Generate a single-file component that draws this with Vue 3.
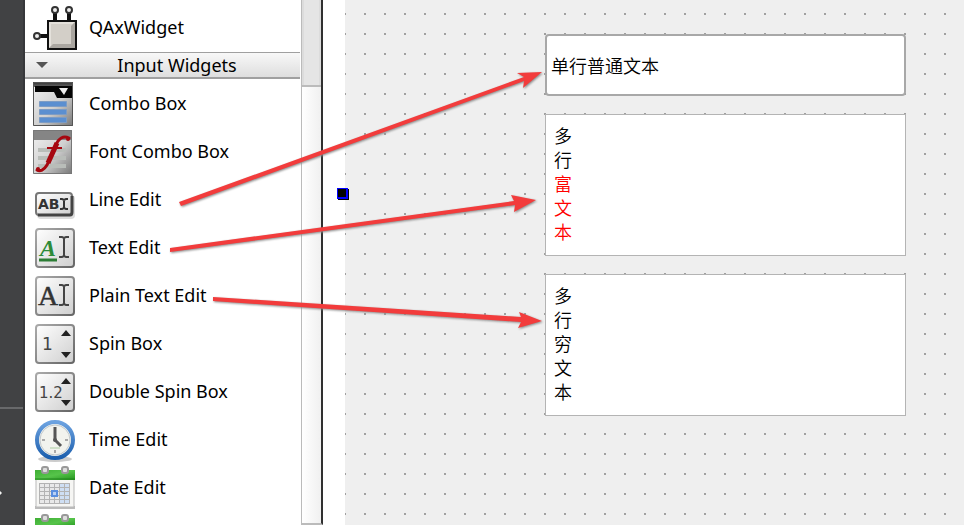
<script setup>
import { ref } from 'vue'

const widgets = [
  { label: 'Combo Box', icon: 'combo' },
  { label: 'Font Combo Box', icon: 'font' },
  { label: 'Line Edit', icon: 'line' },
  { label: 'Text Edit', icon: 'text' },
  { label: 'Plain Text Edit', icon: 'plain' },
  { label: 'Spin Box', icon: 'spin' },
  { label: 'Double Spin Box', icon: 'double' },
  { label: 'Time Edit', icon: 'time' },
  { label: 'Date Edit', icon: 'date' },
  { label: '', icon: 'date' }
]

const single = ref('单行普通文本')
const plain = ref('多\n行\n穷\n文\n本')
const gridCols = [0, 1, 2, 3, 4, 5]
const gridRows = [0, 1, 2, 3, 4]
</script>

<template>
  <div class="designer">
    <aside class="rail">
      <div class="rail-top"></div>
      <div class="rail-bottom">
        <svg class="rail-arrow" viewBox="0 0 3 6" aria-hidden="true"><path d="M0 1L2 3L0 5Z" fill="#f4f4f4" /></svg>
      </div>
    </aside>

    <nav class="palette">
      <ul class="group lead">
        <li class="item">
          <svg class="icon" viewBox="0 0 44 48" aria-hidden="true">
            <g stroke="#111" fill="none">
              <path d="M22 9V19M36 9V19M7 33H15" stroke-width="4" />
              <g stroke="#333" stroke-width="2" fill="#eee">
                <circle cx="22" cy="7" r="3" /><circle cx="36" cy="7" r="3" /><circle cx="4" cy="33" r="3" />
              </g>
            </g>
            <path d="M14 17H44V47H14Z" fill="#111" />
            <path d="M16 19H42V45H16Z" fill="#d3cfc8" />
            <path d="M16 45V19H42L40 21H18V43Z" fill="#e4e1db" />
            <path d="M42 19V45H16L20 41H38V23Z" fill="#aaa6a0" />
          </svg>
          <span>QAxWidget</span>
        </li>
      </ul>
      <button class="heading" type="button">
        <svg class="chevron" viewBox="0 0 12 6" aria-hidden="true"><path d="M0 0H12L6 6Z" fill="#555" /></svg>
        <span>Input Widgets</span>
      </button>
      <ul class="group">
        <li v-for="(w, i) in widgets" :key="i" class="item">
          <svg class="icon" viewBox="0 0 44 48" aria-hidden="true">
            <defs>
              <linearGradient id="face" x1="0" y1="0" x2="1" y2="1">
                <stop offset="0" stop-color="#fff" /><stop offset="1" stop-color="#cfcfcf" />
              </linearGradient>
              <linearGradient id="edge" x1="0" y1="0" x2="1" y2="1">
                <stop offset="0" stop-color="#aaa" /><stop offset="1" stop-color="#666" />
              </linearGradient>
              <linearGradient id="metal" x1="0" y1="0" x2="1" y2="1">
                <stop offset="0" stop-color="#f2f2f2" /><stop offset=".55" stop-color="#d0d0d0" /><stop offset="1" stop-color="#777" />
              </linearGradient>
              <linearGradient id="dark" x1="0" y1="0" x2="0" y2="1">
                <stop offset="0" stop-color="#333" /><stop offset="1" stop-color="#666" />
              </linearGradient>
              <linearGradient id="green" x1="0" y1="0" x2="1" y2="1">
                <stop offset="0" stop-color="#3fae35" /><stop offset=".5" stop-color="#56c44a" /><stop offset="1" stop-color="#23941d" />
              </linearGradient>
              <linearGradient id="blue" x1="0" y1="0" x2="0" y2="1">
                <stop offset="0" stop-color="#6ca2e0" /><stop offset="1" stop-color="#1c5fae" />
              </linearGradient>
            </defs>

            <g v-if="w.icon === 'combo'">
              <path d="M0 3H40V47H0Z" fill="url(#metal)" />
              <path d="M0 3H40V8H0Z" fill="url(#dark)" />
              <path d="M2 7H39V19H24L21 13H2Z" fill="#050505" />
              <path d="M26 9H35L31 16Z" fill="#eee" />
              <path d="M.5 3.5H39.5V46.5H.5Z" fill="none" stroke="#555" />
              <g fill="#5b8fd0" stroke="#7d9cc4">
                <path d="M6.5 22.5H33.5V27.5H6.5ZM6.5 30.5H33.5V35.5H6.5ZM6.5 38.5H33.5V43.5H6.5Z" />
              </g>
            </g>

            <g v-else-if="w.icon === 'font'">
              <path d="M0 3H39V47H0Z" fill="url(#metal)" />
              <path d="M0 3H39V13H0Z" fill="#858585" />
              <path d="M5 23H33M5 31H33M5 39H33" stroke="#b9bdb9" stroke-width="4" />
              <path d="M.5 3.5H38.5V46.5H.5Z" fill="none" stroke="#777" />
              <path d="M36 11C32 9 28 10 25 14C21 20 18 31 14 38C11 43 7 45 4 43" fill="none" stroke="#a60810" stroke-width="3" stroke-linecap="round" />
              <path d="M24 16L20 25L15 36" fill="none" stroke="#a60810" stroke-width="5" />
              <path d="M14 21H29" stroke="#a60810" stroke-width="2" />
              <circle cx="35" cy="12" r="2" fill="#a60810" /><circle cx="5" cy="42" r="2" fill="#a60810" />
            </g>

            <g v-else-if="w.icon === 'line'">
              <rect x="4" y="20" width="38" height="24" rx="4" fill="#ddd" />
              <rect x="3" y="18" width="36" height="22" rx="3" fill="url(#face)" stroke="#777" stroke-width="2" />
              <path d="M5 40H37Q39 40 39 37V21" fill="none" stroke="#444" stroke-width="3" />
              <text class="abc" x="5" y="34">AB</text>
              <path d="M27 24H29L31 25L33 24H35M31 25V33M27 34H29L31 33L33 34H35" fill="none" stroke="#333" stroke-width="2" />
            </g>

            <g v-else-if="['text', 'plain', 'spin', 'double'].includes(w.icon)">
              <rect x="3" y="6" width="38" height="38" rx="3" fill="url(#face)" stroke="url(#edge)" stroke-width="2" />
              <template v-if="w.icon === 'text'">
                <text class="rich" x="7" y="33">A</text>
                <path d="M6 37H24" stroke="#2c7d35" stroke-width="3" />
              </template>
              <text v-if="w.icon === 'plain'" class="serif" x="5" y="34">A</text>
              <path v-if="w.icon === 'text' || w.icon === 'plain'" d="M26 14H29L31 15L33 14H36M31 15V33M26 34H29L31 33L33 34H36" fill="none" stroke="#444" stroke-width="2" />
              <text v-if="w.icon === 'spin'" class="digit" x="9" y="31">1</text>
              <text v-if="w.icon === 'double'" class="digit small" x="6" y="31">1.2</text>
              <path v-if="w.icon === 'spin' || w.icon === 'double'" d="M28 17H38L33 11ZM28 33H38L33 39Z" fill="#222" />
            </g>

            <g v-else-if="w.icon === 'time'">
              <ellipse cx="22" cy="44" rx="17" ry="3" fill="#ccc" />
              <circle cx="22" cy="25" r="18" fill="#f2f3ee" stroke="url(#blue)" stroke-width="4" />
              <circle cx="22" cy="25" r="15" fill="none" stroke="#c3c9cc" />
              <path d="M22 12V25L28 31" fill="none" stroke="#555" stroke-width="3" />
              <path d="M9 25H12M32 25H35M22 35V38" stroke="#aaa" stroke-width="2" />
              <path d="M17 33H27" stroke="#cfe0c8" stroke-width="2" />
              <circle cx="22" cy="25" r="2" fill="#555" />
            </g>

            <g v-else>
              <path d="M2 43H42V46H2Z" fill="#bbb" />
              <path d="M3 16H41V44H3Z" fill="#f6f6f4" stroke="#b9b9b9" />
              <path d="M2 7H42V17H2Z" fill="url(#green)" />
              <path d="M2 16H42" stroke="#23841e" />
              <g fill="#ddd" stroke="#999" stroke-width="2">
                <rect x="9" y="4" width="6" height="6" rx="2" /><rect x="29" y="4" width="6" height="6" rx="2" />
              </g>
              <path d="M6 20H37V41H6Z" fill="#b3b3b3" />
              <g v-for="r in gridRows" :key="r">
                <rect v-for="c in gridCols" :key="c" :x="7 + c * 5" :y="21 + r * 4" width="4" height="3" :fill="c > 3 ? '#cfdff4' : '#e9e9e9'" />
              </g>
              <path d="M19 28H24V33H19Z" fill="#b9d0f5" stroke="#5b8fe0" stroke-width="2" />
            </g>
          </svg>
          <span v-if="w.label">{{ w.label }}</span>
        </li>
      </ul>
    </nav>

    <div class="scrollbar"><div class="thumb"></div></div>

    <main class="workspace">
      <div class="canvas">
        <span class="handle"></span>
        <input v-model="single" class="field" type="text" aria-label="Line Edit" />
        <div class="field area" contenteditable="true" role="textbox" aria-multiline="true" aria-label="Text Edit">
          <div>多</div>
          <div>行</div>
          <div class="red">富</div>
          <div class="red">文</div>
          <div class="red">本</div>
        </div>
        <textarea v-model="plain" class="field area" rows="5" aria-label="Plain Text Edit"></textarea>
      </div>
    </main>

    <svg class="arrows" width="964" height="525" viewBox="0 0 964 525" aria-hidden="true">
      <path d="M179 202L524 77L517 73L542 72L523 88L524 81L181 206Z" />
      <path d="M170 248L514 201L511 195L536 200L514 212L515 205L170 252Z" />
      <path d="M213 297L521 317L519 312L542 321L518 328L521 322L213 301Z" />
    </svg>
  </div>
</template>

<style>
body {
  margin: 0;
}
</style>

<style scoped>
.designer {
  position: relative;
  display: flex;
  height: 100vh;
  overflow: hidden;
  background: #fff;
  color: #000;
  font-family: "Noto Sans", "Noto Sans CJK SC", sans-serif;
  font-size: 18px;
  line-height: 24px;
}

.rail {
  box-sizing: border-box;
  display: flex;
  flex: 0 0 25px;
  flex-direction: column;
  border-right: 2px solid #36373a;
  background: #414244;
}

.rail-top {
  flex: 409 0 0;
}

.rail-bottom {
  flex: 116 0 0;
  border-top: 2px solid #68696b;
}

.rail-arrow {
  display: block;
  width: 3px;
  height: 6px;
  margin-top: 81px;
}

.palette {
  flex: 0 0 275px;
  overflow: hidden;
}

.group {
  margin: 0;
  padding: 0;
  list-style: none;
}

.lead {
  padding: 3px 0 1px;
}

.item {
  display: flex;
  align-items: center;
  gap: 12px;
  height: 48px;
  padding-left: 8px;
  white-space: nowrap;
}

.icon {
  flex: none;
  width: 44px;
  height: 48px;
}

.heading {
  box-sizing: border-box;
  display: flex;
  align-items: center;
  width: 100%;
  height: 27px;
  padding: 0 0 0 11px;
  border: 0;
  border-top: 1px solid #a0a0a0;
  border-bottom: 2px solid #a0a0a0;
  background: linear-gradient(#f8f8f8, #dedede);
  color: inherit;
  font: inherit;
}

.heading span {
  flex: 1;
  padding-left: 6px;
  text-align: center;
}

.chevron {
  width: 12px;
  height: 6px;
}

.abc {
  font: bold 14px "DejaVu Sans", sans-serif;
  fill: #333;
}

.rich {
  font: italic bold 24px "Liberation Serif", serif;
  fill: #2c8a38;
}

.serif {
  font: 28px "Liberation Serif", serif;
  fill: #333;
  stroke: #333;
  stroke-width: 0.5;
}

.digit {
  font: 17px "DejaVu Sans", sans-serif;
  fill: #444;
}

.small {
  font-size: 15px;
}

.scrollbar {
  box-sizing: border-box;
  flex: 0 0 22px;
  margin-left: 1px;
  border-right: 2px solid #303030;
  border-bottom: 2px solid #bbb;
  border-left: 1px solid #bbb;
  background: linear-gradient(90deg, #fff, #f0f0f0);
}

.thumb {
  height: 85px;
  border-bottom: 2px solid #bbb;
  background: #e5e5e5;
  box-shadow: inset 2px 0 #dcdcdc, inset -2px 0 #dcdcdc;
}

.workspace {
  display: flex;
  flex: 1;
  min-width: 0;
  padding-left: 22px;
}

.canvas {
  position: relative;
  display: flex;
  flex: 1;
  flex-direction: column;
  gap: 18px;
  min-width: 0;
  padding: 34px 58px 0 200px;
  background: conic-gradient(from 270deg at 2px 2px, #a0a0a0 90deg, transparent 0) 19px 13px / 20px 20px #efefef;
}

.handle {
  position: absolute;
  top: 188px;
  left: -8px;
  width: 8px;
  height: 8px;
  border: solid #00f;
  border-width: 1px 2px 2px 1px;
  background: #000;
  box-shadow: 1px 1px #000;
}

.field {
  box-sizing: border-box;
  width: 100%;
  margin: 0;
  padding: 17px 4px;
  border: 2px solid #a8a8a8;
  border-radius: 4px;
  outline: 0;
  background: #fff;
  color: #000;
  font: 350 18px/24px "Noto Sans CJK SC", sans-serif;
}

.area {
  display: block;
  flex: none;
  padding: 8px 8px 12px;
  border: 1px solid #b4b4b4;
  border-radius: 0;
  overflow: hidden;
  resize: none;
}

.red {
  color: #f00;
}

.arrows {
  position: absolute;
  top: 0;
  left: 0;
  fill: #f23c3c;
  filter: drop-shadow(1px 1px 1px #888);
  pointer-events: none;
}
</style>
